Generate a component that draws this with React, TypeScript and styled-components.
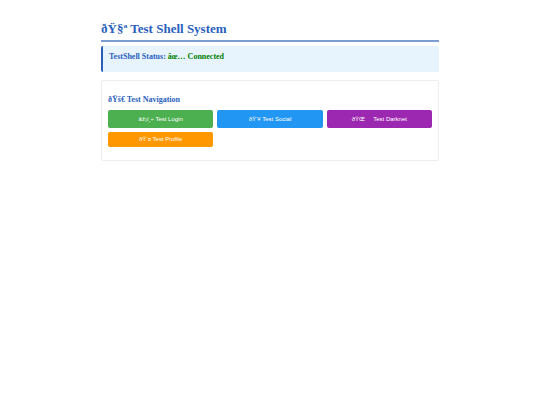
import React from 'react';
import styled, { createGlobalStyle } from 'styled-components';

const GlobalStyle = createGlobalStyle`
  * {
    box-sizing: border-box;
  }

  body {
    margin: 0;
    background-color: #ffffff;
    font-family: "Liberation Serif", "Times New Roman", serif;
  }
`;

const Page = styled.main`
  max-width: 354px;
  margin: 0 auto;
  padding: 20px 8px;
`;

const Title = styled.h1`
  margin: 0 0 4px;
  padding-bottom: 3px;
  border-bottom: 2px solid #7d9cd3;
  color: #2a5fbd;
  font-size: 13px;
  line-height: 17px;
`;

const StatusPanel = styled.section`
  margin-bottom: 8px;
  padding: 6px 6px 10px;
  border-left: 2px solid #2a5fbd;
  border-radius: 2px;
  background-color: #e8f4fd;
  color: #2a5fbd;
  font-size: 8px;
  font-weight: bold;
  line-height: 10px;
`;

const StatusValue = styled.span`
  color: #008000;
`;

const NavPanel = styled.nav`
  padding: 14px 6px 13px;
  border: 1px solid #eeeeee;
  border-radius: 2px;
`;

const NavTitle = styled.h2`
  margin: 0 0 5px;
  color: #2a5fbd;
  font-size: 8px;
  line-height: 10px;
`;

const ButtonGrid = styled.div`
  display: grid;
  grid-template-columns: repeat(3, 1fr);
  grid-template-rows: 18px 15px;
  gap: 4px;
`;

const NavButton = styled.button<{ $color: string }>`
  padding: 0 0 1px;
  border: none;
  border-radius: 2px;
  background-color: ${({ $color }) => $color};
  color: #ffffff;
  font-family: "Liberation Sans", Arial, sans-serif;
  font-size: 6px;
  line-height: 8px;
  white-space: pre;
  cursor: pointer;
`;

const links = [
  { label: 'âž¡ï¸÷ Test Login', color: '#4caf50' },
  { label: 'ðŸ‘¥ Test Social', color: '#2196f3' },
  { label: 'ðŸŒ\u00a0\u00a0\u00a0\u00a0 Test Darknet', color: '#9c27b0' },
  { label: 'ðŸ‘¤ Test Profile', color: '#ff9800' },
];

const App: React.FC = () => {
  return (
    <>
      <GlobalStyle />
      <Page>
        <Title>ðŸ§ª Test Shell System</Title>
        <StatusPanel>
          TestShell Status: <StatusValue>âœ… Connected</StatusValue>
        </StatusPanel>
        <NavPanel>
          <NavTitle>ðŸš€ Test Navigation</NavTitle>
          <ButtonGrid>
            {links.map(({ label, color }) => (
              <NavButton key={label} type="button" $color={color}>
                {label}
              </NavButton>
            ))}
          </ButtonGrid>
        </NavPanel>
      </Page>
    </>
  );
};

export default App;
